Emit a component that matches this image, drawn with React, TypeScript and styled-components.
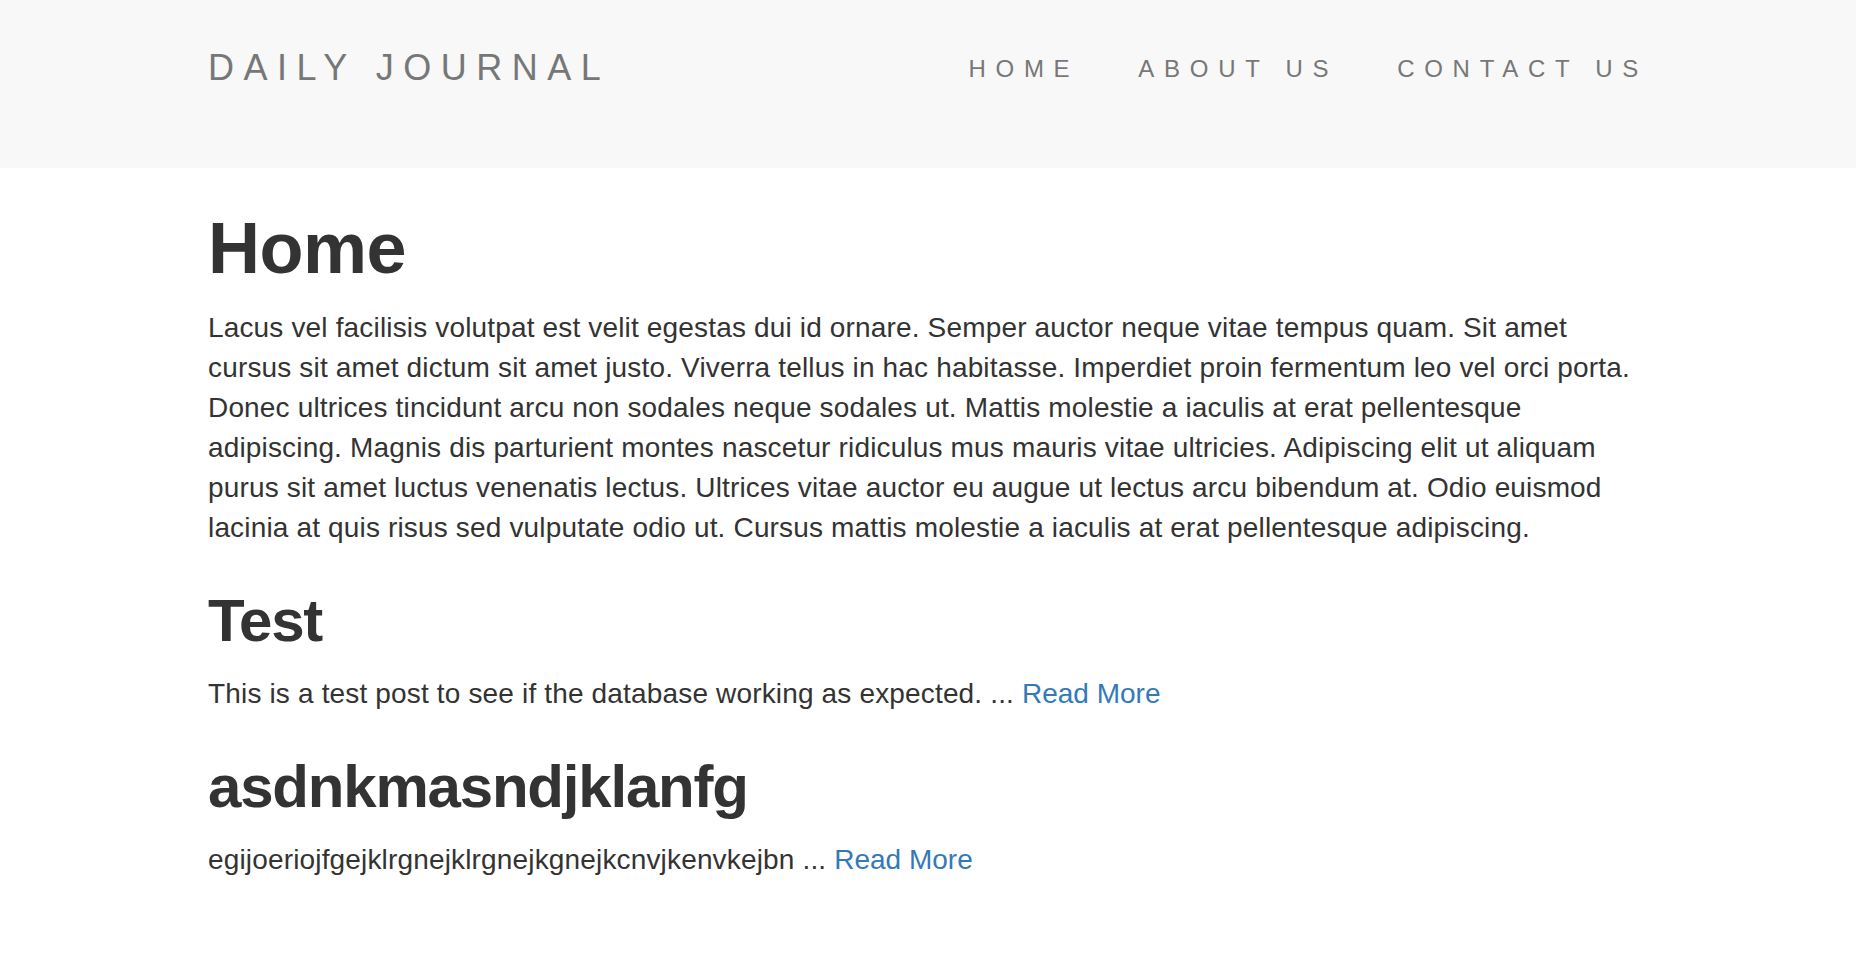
import React from "react";
import styled, { createGlobalStyle } from "styled-components";

const GlobalStyle = createGlobalStyle`
  html, body {
    margin: 0;
    padding: 0;
    background: #ffffff;
  }
  body {
    font-family: "Liberation Sans", Arial, Helvetica, sans-serif;
    font-size: 28px;
    line-height: 40px;
    color: #333333;
  }
  * { box-sizing: border-box; }
`;

const Navbar = styled.header`
  background: #f8f8f8;
  height: 168px;
`;

const Container = styled.div`
  width: 1440px;
  margin: 0 auto;
`;

const NavInner = styled(Container)`
  display: flex;
  justify-content: space-between;
  align-items: flex-start;
  padding-top: 48px;
`;

const Brand = styled.a`
  font-size: 36px;
  line-height: 40px;
  letter-spacing: 9.5px;
  color: #777777;
  text-decoration: none;
  text-transform: uppercase;
`;

const NavList = styled.nav`
  display: flex;
  gap: 59px;
  margin-top: 7px;
  margin-right: 0;
`;

const NavLink = styled.a`
  font-size: 24px;
  line-height: 28px;
  letter-spacing: 9.7px;
  color: #777777;
  text-decoration: none;
  text-transform: uppercase;
`;

const Main = styled(Container)`
  padding-top: 41px;
  letter-spacing: 0.16px;
`;

const PageTitle = styled.h1`
  font-size: 72px;
  line-height: 79px;
  font-weight: 700;
  letter-spacing: -0.5px;
  margin: 0 0 20px;
  color: #333333;
`;

const PostTitle = styled.h2`
  font-size: 60px;
  line-height: 66px;
  font-weight: 700;
  letter-spacing: -1.2px;
  margin: 40px 0 20px;
  color: #333333;
`;

const Paragraph = styled.p`
  margin: 0 0 20px;
`;

const ReadMore = styled.a`
  color: #337ab7;
  text-decoration: none;
  letter-spacing: 0;
`;

const posts = [
  {
    title: "Test",
    body: "This is a test post to see if the database working as expected.",
  },
  {
    title: "asdnkmasndjklanfg",
    body: "egijoeriojfgejklrgnejklrgnejkgnejkcnvjkenvkejbn",
  },
];

export default function App() {
  return (
    <>
      <GlobalStyle />
      <Navbar>
        <NavInner>
          <Brand href="#">Daily Journal</Brand>
          <NavList>
            <NavLink href="#">Home</NavLink>
            <NavLink href="#">About Us</NavLink>
            <NavLink href="#">Contact Us</NavLink>
          </NavList>
        </NavInner>
      </Navbar>
      <Main>
        <PageTitle>Home</PageTitle>
        <Paragraph>
          Lacus vel facilisis volutpat est velit egestas dui id ornare. Semper
          auctor neque vitae tempus quam. Sit amet cursus sit amet dictum sit
          amet justo. Viverra tellus in hac habitasse. Imperdiet proin fermentum
          leo vel orci porta. Donec ultrices tincidunt arcu non sodales neque
          sodales ut. Mattis molestie a iaculis at erat pellentesque adipiscing.
          Magnis dis parturient montes nascetur ridiculus mus mauris vitae
          ultricies. Adipiscing elit ut aliquam purus sit amet luctus venenatis
          lectus. Ultrices vitae auctor eu augue ut lectus arcu bibendum at.
          Odio euismod lacinia at quis risus sed vulputate odio ut. Cursus
          mattis molestie a iaculis at erat pellentesque adipiscing.
        </Paragraph>
        {posts.map((post) => (
          <React.Fragment key={post.title}>
            <PostTitle>{post.title}</PostTitle>
            <Paragraph>
              {post.body} ... <ReadMore href="#">Read More</ReadMore>
            </Paragraph>
          </React.Fragment>
        ))}
      </Main>
    </>
  );
}
